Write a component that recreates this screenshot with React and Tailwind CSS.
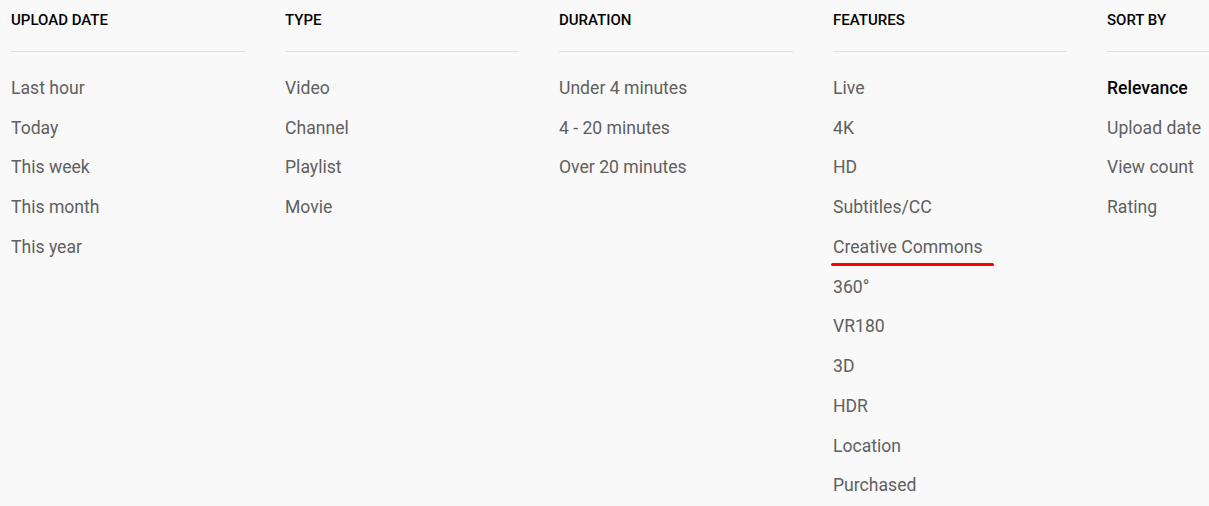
import React from 'react';

const groups = [
  { title: 'Upload date', items: ['Last hour', 'Today', 'This week', 'This month', 'This year'] },
  { title: 'Type', items: ['Video', 'Channel', 'Playlist', 'Movie'] },
  { title: 'Duration', items: ['Under 4 minutes', '4 - 20 minutes', 'Over 20 minutes'] },
  {
    title: 'Features',
    items: ['Live', '4K', 'HD', 'Subtitles/CC', 'Creative Commons', '360°', 'VR180', '3D', 'HDR', 'Location', 'Purchased'],
  },
  { title: 'Sort by', items: ['Relevance', 'Upload date', 'View count', 'Rating'], active: 'Relevance' },
];

function FilterGroup({ group }) {
  return (
    <div className="w-[234px] shrink-0">
      <div className="h-[52px] pt-[10px] border-b border-[#e0e0e0]">
        <h4 className="text-[15px] leading-5 font-medium uppercase text-[#030303]">{group.title}</h4>
      </div>
      <div className="pt-[16px]">
        {group.items.map((item) => (
          <div key={item} className="h-[39.75px] flex items-center">
            <span
              className={
                item === group.active
                  ? 'relative text-[17.6px] leading-[26px] font-medium text-[#030303]'
                  : 'relative text-[17.6px] leading-[26px] text-[#606060]'
              }
            >
              {item}
              {item === 'Creative Commons' && (
                <span className="absolute left-[-2px] right-[-12px] top-[29px] h-[3px] rounded-full bg-[#ff0000]" />
              )}
            </span>
          </div>
        ))}
      </div>
    </div>
  );
}

export default function App() {
  return (
    <div className="w-[1209px] h-[506px] overflow-hidden bg-[#f9f9f9] font-['Roboto',sans-serif]">
      <div className="flex gap-10 pl-[11px]">
        {groups.map((g) => (
          <FilterGroup key={g.title} group={g} />
        ))}
      </div>
    </div>
  );
}
